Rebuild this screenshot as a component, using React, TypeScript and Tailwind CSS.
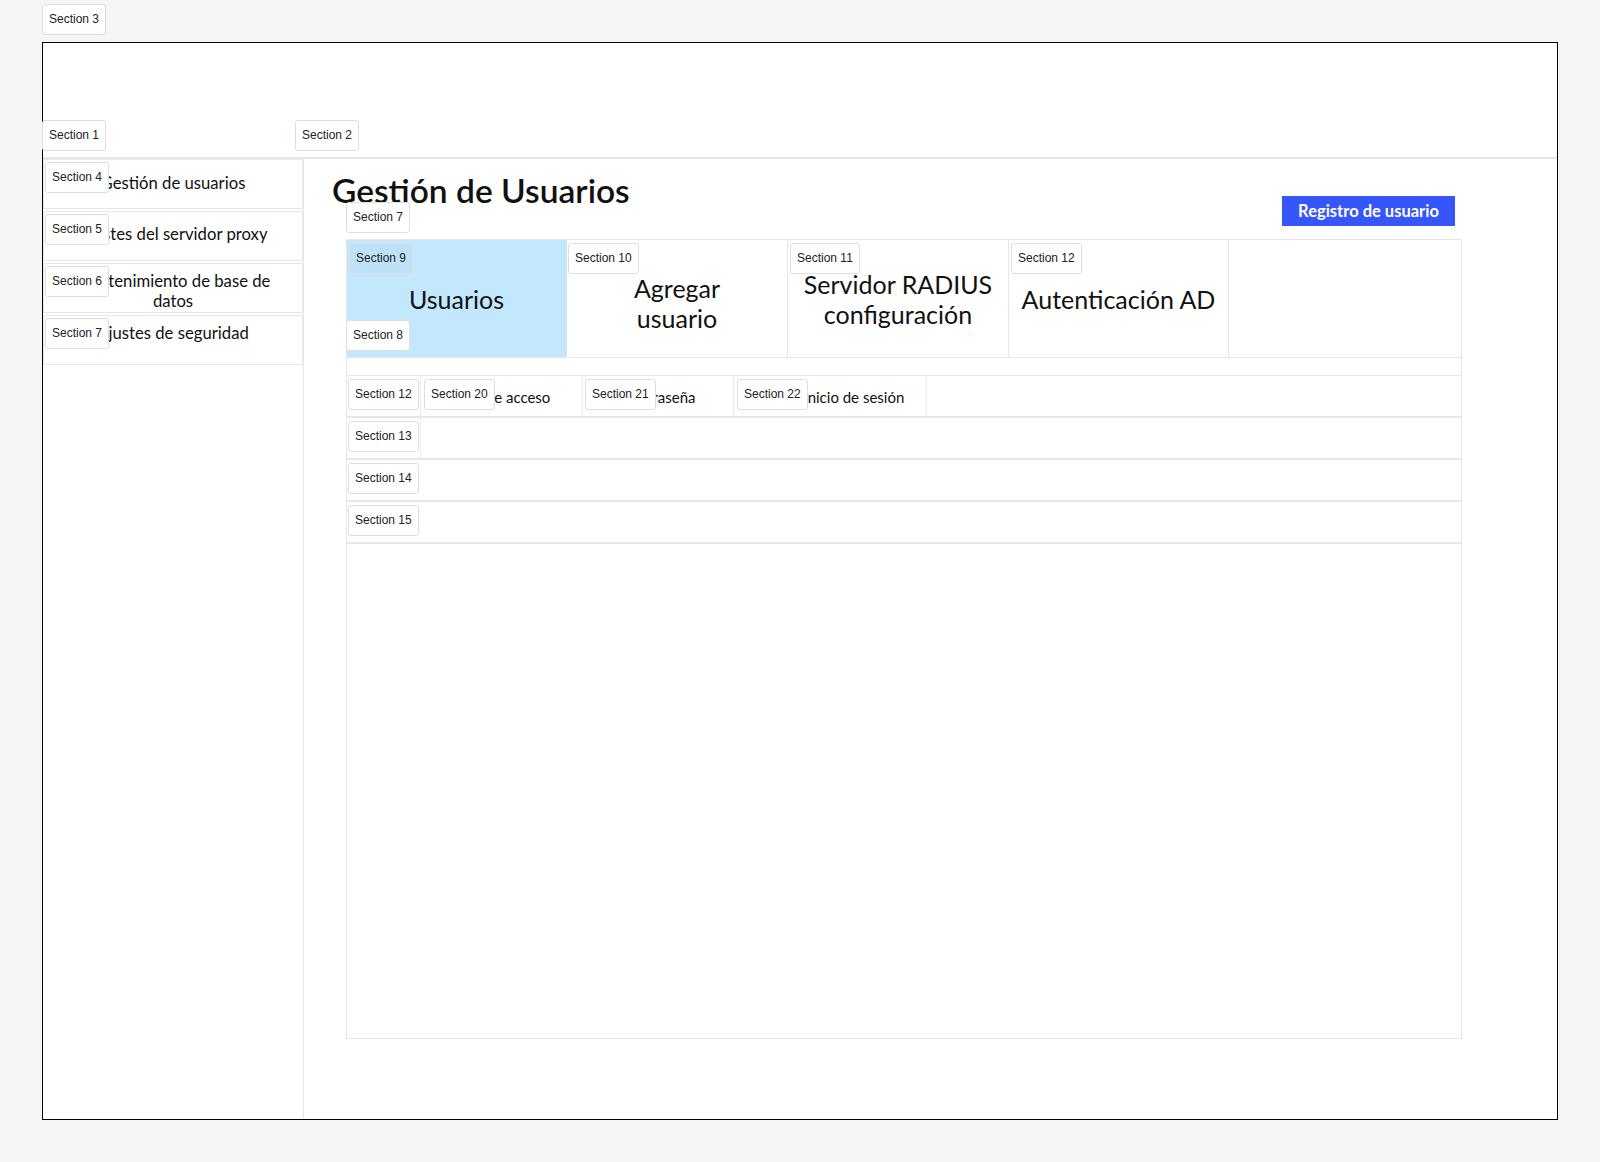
import React from "react";

type LabelProps = { n: number; className?: string; tinted?: boolean };

const Label = ({ n, className = "", tinted = false }: LabelProps) => (
  <div
    className={`absolute z-10 whitespace-nowrap rounded-[3px] border border-[#dedede] px-[6px] py-[6px] font-['Liberation_Sans',Arial,sans-serif] text-[12px] leading-[17px] text-[#222] ${
      tinted ? "bg-[#bde2f8]" : "bg-white"
    } ${className}`}
  >
    Section {n}
  </div>
);

const sideItems = [
  { n: 4, text: "Gestión de usuarios", pad: "pt-[13px]" },
  { n: 5, text: "Ajustes del servidor proxy", pad: "pt-[12px]" },
  { n: 6, text: "Mantenimiento de base de datos", pad: "pt-[7px]" },
  { n: 7, text: "Ajustes de seguridad", pad: "pt-[7px]" },
];

export default function App() {
  return (
    <div className="relative min-h-[1162px] bg-[#f6f6f6] pl-[42px] pt-[42px] font-['Lato',sans-serif] text-[#111]">
      <Label n={3} className="left-[42px] top-[4px]" />

      <div className="flex h-[1078px] w-[1516px] flex-col border border-black bg-white">
        {/* header */}
        <header className="relative h-[116px] shrink-0 border-b-2 border-[#e6e6e6]">
          <Label n={1} className="-left-[1px] top-[77px]" />
          <Label n={2} className="left-[252px] top-[77px]" />
        </header>

        <div className="flex flex-1">
          {/* sidebar */}
          <aside className="flex w-[261px] shrink-0 flex-col gap-[2px] border-r border-[#e6e6e6]">
            {sideItems.map((it) => (
              <div
                key={it.n}
                className={`relative h-[50px] border border-[#e8e8e8] px-[14px] text-center text-[16.7px] leading-[20px] ${it.pad}`}
              >
                <Label n={it.n} className="left-[1px] top-[2px]" />
                {it.text}
              </div>
            ))}
          </aside>

          {/* main */}
          <main className="relative flex-1 pt-[12px]">
            <Label n={7} className="left-[42px] top-[43px]" />
            <div className="ml-[28px] flex h-[55px] w-[1123px] items-end justify-between">
              <h1 className="self-start text-[33.5px] font-semibold leading-[38px]">
                Gestión de Usuarios
              </h1>
              <button className="h-[30px] w-[173px] bg-[#3656fb] text-[16.5px] font-bold text-white">
                Registro de usuario
              </button>
            </div>

            <div className="ml-[42px] mt-[13px] w-[1116px]">
              {/* tabs */}
              <div className="relative flex h-[119px] border border-[#e6e6e6] text-[25px] leading-[30px]">
                <Label n={8} className="-left-[1px] top-[80px]" />
                <div className="relative flex w-[220px] items-center justify-center border-r border-[#e0e0e0] bg-[#c3e7fc]">
                  <Label n={9} tinted className="left-[2px] top-[3px]" />
                  <span>Usuarios</span>
                </div>
                <div className="relative flex w-[221px] items-center justify-center border-r border-[#e6e6e6] text-center">
                  <Label n={10} className="left-[1px] top-[3px]" />
                  <span className="mt-[8px]">
                    Agregar
                    <br />
                    usuario
                  </span>
                </div>
                <div className="relative flex w-[221px] items-center justify-center border-r border-[#e6e6e6] text-center">
                  <Label n={11} className="left-[2px] top-[3px]" />
                  <span>
                    Servidor RADIUS
                    <br />
                    configuración
                  </span>
                </div>
                <div className="relative flex w-[220px] items-center justify-center border-r border-[#e6e6e6] text-center">
                  <Label n={12} className="left-[2px] top-[3px]" />
                  <span>Autenticación AD</span>
                </div>
                <div className="flex-1" />
              </div>

              {/* content */}
              <div className="h-[681px] border-x border-b border-[#e6e6e6] text-[15px]">
                <div className="h-[18px] border-b border-[#e6e6e6]" />
                <div className="flex h-[42px] border-b-2 border-[#e6e6e6]">
                  <div className="relative flex w-[74px] items-center justify-center border-r border-[#ececec]">
                    <Label n={12} className="left-[1px] top-[3px]" />
                    <span className="mt-[2px]">ID</span>
                  </div>
                  <div className="relative flex w-[162px] items-center justify-center border-r border-[#ececec]">
                    <Label n={20} className="left-[3px] top-[3px]" />
                    <span className="mt-[2px]">Tipo de acceso</span>
                  </div>
                  <div className="relative flex w-[151px] items-center justify-center border-r border-[#ececec]">
                    <Label n={21} className="left-[2px] top-[3px]" />
                    <span className="mt-[2px]">Contraseña</span>
                  </div>
                  <div className="relative flex w-[193px] items-center justify-center border-r border-[#ececec]">
                    <Label n={22} className="left-[3px] top-[3px]" />
                    <span className="mt-[2px]">Último inicio de sesión</span>
                  </div>
                  <div className="flex-1" />
                </div>
                <div className="flex h-[42px] border-b-2 border-[#e6e6e6]">
                  <div className="relative w-[74px] border-r border-[#ececec]">
                    <Label n={13} className="left-[1px] top-[3px]" />
                  </div>
                  <div className="flex-1" />
                </div>
                <div className="relative h-[42px] border-b-2 border-[#e6e6e6]">
                  <Label n={14} className="left-[1px] top-[3px]" />
                </div>
                <div className="relative h-[42px] border-b-2 border-[#e6e6e6]">
                  <Label n={15} className="left-[1px] top-[3px]" />
                </div>
              </div>
            </div>
          </main>
        </div>
      </div>
    </div>
  );
}
